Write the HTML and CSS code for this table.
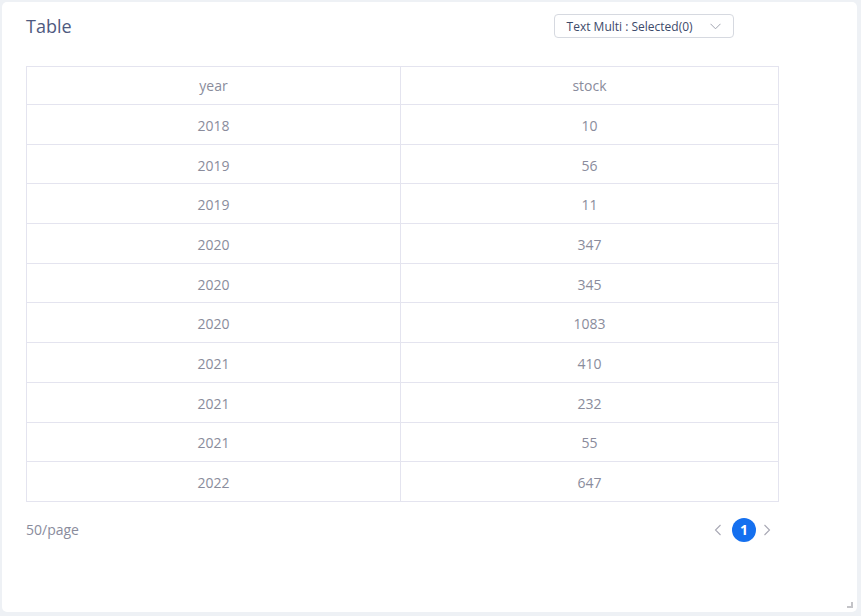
FILE: index.html
```html
<!DOCTYPE html>
<html>
<head>
<meta charset="utf-8">
<link rel="stylesheet" href="styles.css">
</head>
<body>
<div class="card">
  <div class="header">
    <div class="title">Table</div>
    <div class="select">
      <span class="select-text">Text Multi : Selected(0)</span>
      <svg class="chev" width="11" height="7" viewBox="0 0 11 7"><path d="M0.5 0.8 L5.5 5.8 L10.5 0.8" fill="none" stroke="#a0a4b0" stroke-width="1"/></svg>
    </div>
  </div>
  <div class="table">
    <div class="row head"><div class="cell">year</div><div class="cell">stock</div></div>
    <div class="row"><div class="cell">2018</div><div class="cell">10</div></div>
    <div class="row"><div class="cell">2019</div><div class="cell">56</div></div>
    <div class="row"><div class="cell">2019</div><div class="cell">11</div></div>
    <div class="row"><div class="cell">2020</div><div class="cell">347</div></div>
    <div class="row"><div class="cell">2020</div><div class="cell">345</div></div>
    <div class="row"><div class="cell">2020</div><div class="cell">1083</div></div>
    <div class="row"><div class="cell">2021</div><div class="cell">410</div></div>
    <div class="row"><div class="cell">2021</div><div class="cell">232</div></div>
    <div class="row"><div class="cell">2021</div><div class="cell">55</div></div>
    <div class="row"><div class="cell">2022</div><div class="cell">647</div></div>
  </div>
  <div class="footer">
    <div class="per-page">50/page</div>
    <div class="pager">
      <svg class="prev" width="8" height="12" viewBox="0 0 8 12"><path d="M6.5 1 L1.5 6 L6.5 11" fill="none" stroke="#a8a8b4" stroke-width="1.1"/></svg>
      <div class="page-num">1</div>
      <svg class="next" width="8" height="12" viewBox="0 0 8 12"><path d="M1.5 1 L6.5 6 L1.5 11" fill="none" stroke="#a8a8b4" stroke-width="1.1"/></svg>
    </div>
  </div>
  <svg class="grip" width="6" height="6" viewBox="0 0 6 6"><path d="M5 0 V5 H0" fill="none" stroke="#c4c4c8" stroke-width="2"/></svg>
</div>
</body>
</html>
```
FILE: styles.css
```css
html, body {
  margin: 0;
  padding: 0;
  background: #eef1f5;
  font-family: "Open Sans", "Noto Sans", sans-serif;
}
body {
  padding: 2px 4px 4px 2px;
  width: 861px;
  height: 616px;
  box-sizing: border-box;
}
.card {
  position: relative;
  background: #ffffff;
  border-radius: 5px;
  height: 610px;
  padding: 0 24px;
  box-sizing: border-box;
}
.header {
  height: 64px;
  display: flex;
  align-items: flex-start;
}
.title {
  font-size: 18px;
  color: #4f5a80;
  margin-top: 12px;
}
.select {
  margin-left: 482px;
  margin-top: 12px;
  width: 180px;
  height: 24px;
  box-sizing: border-box;
  border: 1px solid #d6d9e0;
  border-radius: 4px;
  display: flex;
  align-items: center;
  padding: 1px 12px 0 12px;
}
.select-text {
  font-size: 12px;
  color: #3d4a6a;
  flex: 1;
  white-space: nowrap;
}
.chev { display: block; margin-top: -1px; }
.table {
  width: 753px;
  border: 1px solid #e4e4ef;
  box-sizing: border-box;
}
.row {
  display: grid;
  grid-template-columns: 373px 1fr;
  height: 39.7px;
  border-top: 1px solid #e4e4ef;
  box-sizing: border-box;
}
.row.head {
  height: 37px;
  border-top: none;
}
.cell {
  display: flex;
  align-items: center;
  justify-content: center;
  font-size: 14px;
  color: #8a8c9c;
  padding-top: 2px;
}
.row.head .cell {
  padding-top: 0;
}
.cell + .cell {
  border-left: 1px solid #e4e4ef;
}
.footer {
  width: 753px;
  display: flex;
  justify-content: space-between;
  align-items: center;
  height: 56px;
}
.per-page {
  font-size: 14px;
  color: #8a8c9c;
}
.pager {
  display: flex;
  align-items: center;
  margin-right: 8px;
}
.pager svg { display: block; }
.prev { margin-right: 10px; }
.next { margin-left: 7px; }
.page-num {
  width: 24px;
  height: 24px;
  border-radius: 50%;
  background: #1570ef;
  color: #fff;
  font-size: 14px;
  font-weight: 700;
  display: flex;
  align-items: center;
  justify-content: center;
}
.grip {
  position: absolute;
  right: 4px;
  bottom: 4px;
}
```
